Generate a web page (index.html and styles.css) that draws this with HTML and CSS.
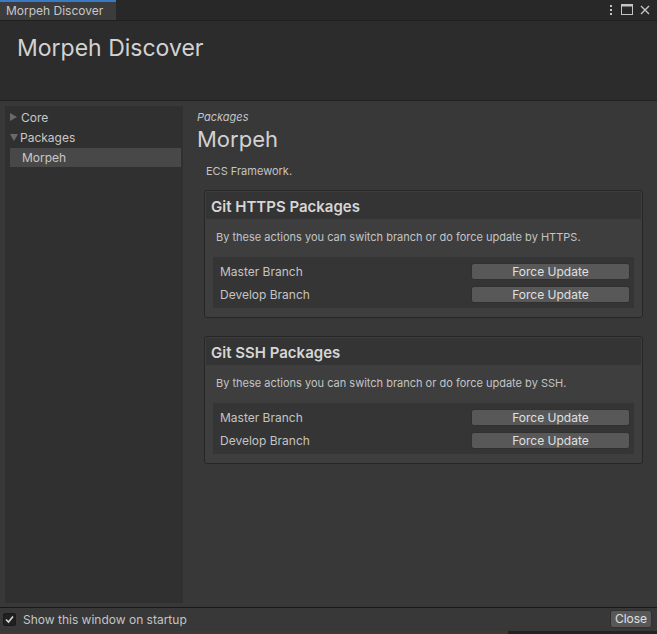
FILE: index.html
```html
<!DOCTYPE html>
<html>
<head>
<meta charset="utf-8">
<link rel="stylesheet" href="styles.css">
</head>
<body>
<div class="window">
  <div class="tabbar">
    <div class="tab">Morpeh Discover</div>
    <div class="winicons">
      <svg width="6" height="12" viewBox="0 0 6 12"><rect x="2" y="1" width="2" height="2" fill="#c4c4c4"/><rect x="2" y="5" width="2" height="2" fill="#c4c4c4"/><rect x="2" y="9" width="2" height="2" fill="#c4c4c4"/></svg>
      <svg width="12" height="11" viewBox="0 0 12 11"><rect x="0.5" y="0.5" width="11" height="10" fill="none" stroke="#c4c4c4"/><rect x="0.5" y="0.5" width="11" height="2" fill="#c4c4c4"/></svg>
      <svg width="10" height="10" viewBox="0 0 10 10"><path d="M1 1 L9 9 M9 1 L1 9" stroke="#c4c4c4" stroke-width="1.4"/></svg>
    </div>
  </div>
  <div class="header">
    <div class="title">Morpeh Discover</div>
  </div>
  <div class="main">
    <div class="sidebar">
      <div class="tree-item"><span class="arrow right"></span>Core</div>
      <div class="tree-item"><span class="arrow down"></span>Packages</div>
      <div class="tree-item selected">Morpeh</div>
    </div>
    <div class="content">
      <div class="crumb">Packages</div>
      <div class="pkg-title">Morpeh</div>
      <div class="pkg-desc">ECS Framework.</div>

      <div class="box">
        <div class="box-header">Git HTTPS Packages</div>
        <div class="box-desc">By these actions you can switch branch or do force update by HTTPS.</div>
        <div class="rows">
          <div class="row"><span class="label">Master Branch</span><button class="btn">Force Update</button></div>
          <div class="row"><span class="label">Develop Branch</span><button class="btn">Force Update</button></div>
        </div>
      </div>

      <div class="box">
        <div class="box-header">Git SSH Packages</div>
        <div class="box-desc">By these actions you can switch branch or do force update by SSH.</div>
        <div class="rows">
          <div class="row"><span class="label">Master Branch</span><button class="btn">Force Update</button></div>
          <div class="row"><span class="label">Develop Branch</span><button class="btn">Force Update</button></div>
        </div>
      </div>
    </div>
  </div>
  <div class="footer">
    <label class="check">
      <span class="checkbox"><svg width="11" height="11" viewBox="0 0 11 11"><path d="M2 5.5 L4.5 8 L9 2.5" fill="none" stroke="#d8d8d8" stroke-width="1.6"/></svg></span>
      Show this window on startup
    </label>
    <button class="close">Close</button>
  </div>
  <div class="bottomstrip"><div class="strip-left"></div></div>
</div>
</body>
</html>
```
FILE: styles.css
```css
* { box-sizing: border-box; }
html, body { margin: 0; padding: 0; }
body {
  width: 657px;
  height: 634px;
  background: #383838;
  font-family: Inter, "Noto Sans", sans-serif;
  color: #c4c4c4;
  font-size: 12px;
  overflow: hidden;
}
.window {
  display: flex;
  flex-direction: column;
  height: 634px;
}
.tabbar {
  height: 21px;
  background: #282828;
  border-bottom: 1px solid #1f1f1f;
  display: flex;
  align-items: stretch;
  justify-content: space-between;
}
.tab {
  width: 116px;
  background: #3c3c3c;
  border-top: 2px solid #3a7ac4;
  padding-left: 6px;
  font-size: 12px;
  line-height: 17px;
  color: #c8c8c8;
}
.winicons {
  display: flex;
  align-items: center;
  gap: 7px;
  padding-right: 7px;
  padding-bottom: 1px;
}
.header {
  height: 80px;
  background: #2c2c2c;
  border-bottom: 1px solid #222222;
  padding: 13px 0 0 17px;
}
.title {
  font-size: 23px;
  line-height: 28px;
  color: #d2d2d2;
}
.main {
  flex: 1;
  display: flex;
  padding: 5px 14px 4px 5px;
}
.sidebar {
  width: 178px;
  background: #303030;
  padding: 1px 2px 0 5px;
}
.tree-item {
  height: 20px;
  display: flex;
  align-items: center;
  font-size: 12px;
  color: #c8c8c8;
}
.tree-item.selected {
  height: 19px;
  background: #484848;
  padding-left: 12px;
  margin-top: 1px;
}
.arrow {
  width: 0;
  height: 0;
  margin-right: 4px;
  margin-left: 0;
}
.arrow.right {
  border-top: 4.5px solid transparent;
  border-bottom: 4.5px solid transparent;
  border-left: 7px solid #6a6a6a;
  margin-right: 4px;
}
.arrow.down {
  border-left: 4.5px solid transparent;
  border-right: 4.5px solid transparent;
  border-top: 7px solid #6a6a6a;
  margin-right: 2px;
}
.content {
  flex: 1;
  padding: 4px 0 0 14px;
}
.crumb {
  font-size: 11px;
  font-style: italic;
  line-height: 14px;
  color: #c4c4c4;
}
.pkg-title {
  margin-top: 2px;
  font-size: 22px;
  line-height: 26px;
  color: #d2d2d2;
}
.pkg-desc {
  margin: 12px 0 0 9px;
  font-size: 11px;
  line-height: 14px;
  color: #c4c4c4;
}
.box {
  margin: 12px 0 0 7px;
  border: 1px solid #262626;
  border-radius: 3px;
  background: #3e3e3e;
  padding: 1px 1px 9px 1px;
}
.box + .box { margin-top: 18px; }
.box-header {
  height: 27px;
  background: #343434;
  padding-left: 5px;
  font-size: 15px;
  font-weight: 600;
  line-height: 29px;
  color: #d6d6d6;
}
.box-desc {
  margin: 11px 0 0 10px;
  font-size: 11px;
  line-height: 14px;
  color: #c4c4c4;
}
.rows {
  margin: 13px 7px 0 7px;
  background: #353535;
  padding: 6px 4px 5px 7px;
  display: flex;
  flex-direction: column;
  gap: 6px;
}
.row {
  height: 17px;
  display: flex;
  align-items: center;
  justify-content: space-between;
}
.label {
  font-size: 12px;
  color: #c4c4c4;
  margin-top: -1px;
}
.btn {
  width: 159px;
  height: 17px;
  background: #585858;
  border: 1px solid #303030;
  border-radius: 3px;
  color: #e0e0e0;
  font-family: Inter, "Noto Sans", sans-serif;
  font-size: 12px;
  line-height: 15px;
  padding: 0;
}
.footer {
  height: 24px;
  border-top: 1px solid #191919;
  background: #383838;
  display: flex;
  align-items: center;
  justify-content: space-between;
  padding: 0 5px 1px 3px;
}
.check {
  display: flex;
  align-items: center;
  gap: 7px;
  font-size: 12px;
  color: #c4c4c4;
}
.checkbox {
  width: 13px;
  height: 13px;
  background: #202020;
  border: 1px solid #1a1a1a;
  border-radius: 2px;
  display: flex;
  align-items: center;
  justify-content: center;
}
.close {
  width: 42px;
  height: 18px;
  background: #585858;
  border: 1px solid #303030;
  border-radius: 3px;
  color: #e0e0e0;
  font-family: Inter, "Noto Sans", sans-serif;
  font-size: 12px;
  padding: 0;
  line-height: 16px;
}
.bottomstrip {
  height: 3px;
  background: #232323;
  display: flex;
}
.strip-left {
  width: 508px;
  background: #3f3a35;
}
```
